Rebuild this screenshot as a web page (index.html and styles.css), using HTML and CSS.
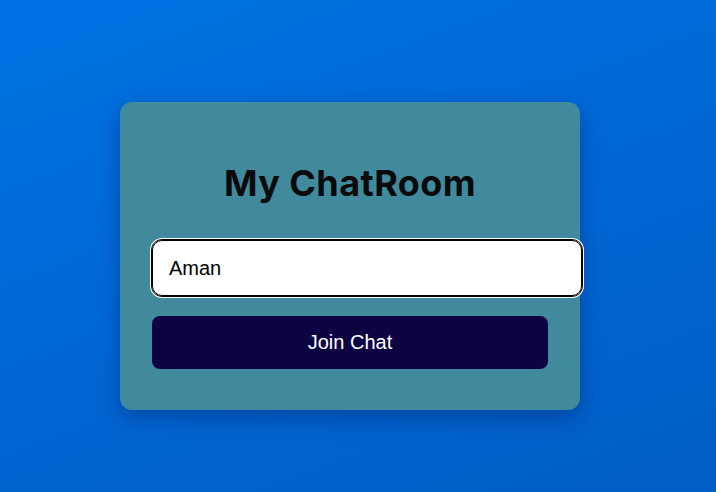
FILE: index.html
```html
<!DOCTYPE html>
<html lang="en">
<head>
<meta charset="utf-8">
<title>My ChatRoom</title>
<link rel="stylesheet" href="styles.css">
</head>
<body>
  <main class="page">
    <section class="card">
      <h1 class="title">My ChatRoom</h1>
      <form class="join-form">
        <input class="name-input" type="text" value="Aman">
        <button class="join-btn" type="button">Join Chat</button>
      </form>
    </section>
  </main>
</body>
</html>
```

FILE: styles.css
```css
* { box-sizing: content-box; }
html, body {
  margin: 0;
  height: 100%;
}
body {
  background: linear-gradient(160deg, #0073e4 0%, #0066d4 55%, #005ec6 100%);
  font-family: "Liberation Sans", Arial, sans-serif;
}
.page {
  display: flex;
  align-items: flex-start;
  padding: 102px 0 0 120px;
}
.card {
  width: 396px;
  height: 228px;
  padding: 40px 32px;
  background: #418a9e;
  border-radius: 12px;
  box-shadow: 0 8px 22px rgba(0, 20, 80, 0.35);
}
.title {
  margin: 20px 0 0;
  height: 78px;
  text-align: center;
  font-family: Inter, "Open Sans", sans-serif;
  font-weight: 700;
  font-size: 36px;
  line-height: 42px;
  color: #0a0a0a;
  letter-spacing: 0.4px;
}
.join-form {
  display: flex;
  flex-direction: column;
  gap: 20px;
}
.name-input {
  width: 100%;
  margin: 0;
  padding: 16px;
  border: 1px solid #000;
  border-radius: 10px;
  outline: 1px solid #000;
  box-shadow: 0 0 0 2px #fff;
  background: #fff;
  font-family: "Liberation Sans", Arial, sans-serif;
  font-size: 20px;
  line-height: 22px;
  color: #000;
}
.join-btn {
  width: 100%;
  padding: 15px 0;
  border: none;
  border-radius: 8px;
  background: #0d0342;
  color: #fff;
  font-family: "Liberation Sans", Arial, sans-serif;
  font-size: 20px;
  line-height: 23px;
}
```
